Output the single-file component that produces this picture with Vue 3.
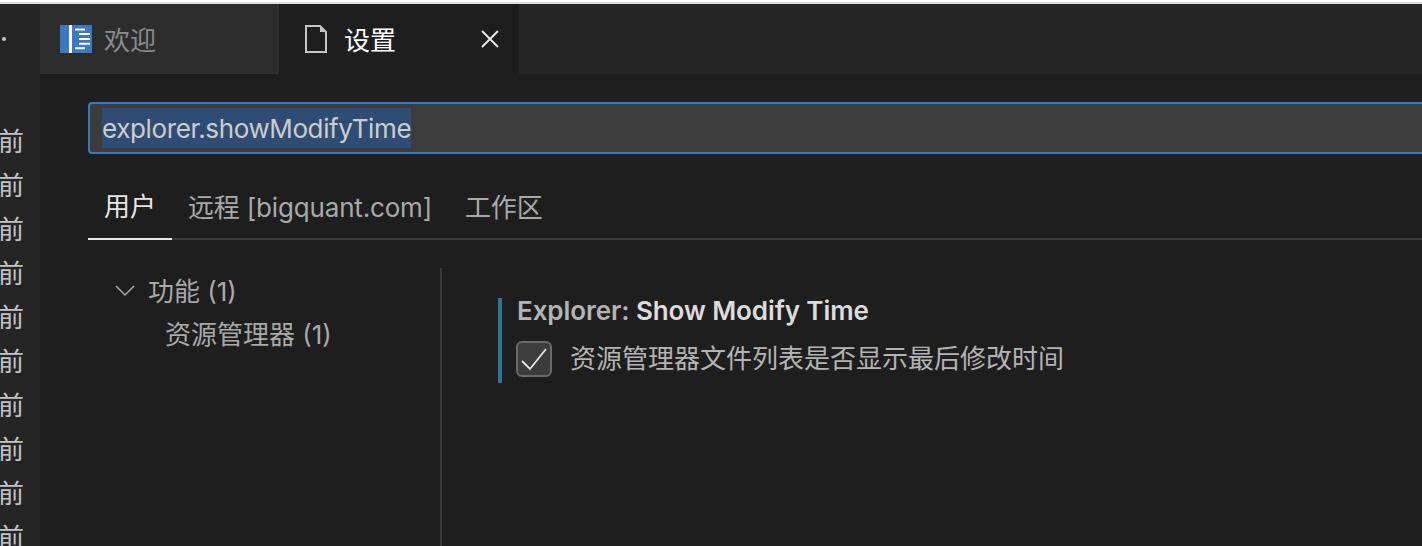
<style>
body {
  margin: 0;
  background: #1e1e1e;
}
</style>

<style scoped>
.page {
  width: 1422px;
  height: 546px;
  overflow: hidden;
  box-sizing: border-box;
  border-top: 2px solid #fff;
}

.window {
  display: flex;
  height: 544px;
  overflow: hidden;
  box-sizing: border-box;
  border-top: 2px solid #dedede;
  background: #1e1e1e;
  color: #ccc;
  font-family: Inter, "Noto Sans CJK SC", sans-serif;
  font-size: 26px;
}

.side {
  flex: 0 0 40px;
  background: #252526;
  overflow: hidden;
}

.side-dot {
  width: 4px;
  height: 4px;
  margin: 33px 0 0 2px;
  border-radius: 50%;
  background: #ccc;
}

.side-lines {
  margin: 77px 0 0 -2px;
  font-family: "Noto Sans CJK SC", sans-serif;
  line-height: 44px;
  color: #c4c4c4;
}

.main {
  flex: 1;
  min-width: 0;
}

.tabs {
  display: flex;
  height: 70px;
  background: #252526;
}

.tab {
  display: flex;
  align-items: center;
  box-sizing: border-box;
  width: 239px;
  padding-left: 20px;
  background: #2d2d2d;
  color: #8a8a8a;
  font-family: "Noto Sans CJK SC", sans-serif;
}

.tab.active {
  width: 240px;
  padding-left: 26px;
  background: #1e1e1e;
  color: #fff;
}

.tab-icon {
  flex: none;
  margin-right: 12px;
}

.tab.active .tab-icon {
  margin-right: 17px;
}

.tab-label {
  flex: 1;
  margin-bottom: 2px;
}

.tab-close {
  flex: none;
  margin-right: 20px;
}

.search {
  box-sizing: border-box;
  height: 52px;
  margin: 28px -8px 0 48px;
  padding: 4px 0 0 12px;
  border: 2px solid #3478c6;
  border-radius: 4px;
  background: #3c3c3c;
}

.search-text {
  display: inline-block;
  height: 40px;
  line-height: 41px;
  letter-spacing: -0.38px;
  background: #2f4d74;
  color: #ccc;
}

.scope {
  display: flex;
  height: 70px;
  margin: 16px 0 0 48px;
  border-bottom: 2px solid #3a3a3a;
  box-sizing: border-box;
}

.scope-item {
  display: flex;
  align-items: center;
  box-sizing: border-box;
  height: 70px;
  padding: 0 17px 0 16px;
  letter-spacing: -0.17px;
  white-space: nowrap;
  color: #a9a9a9;
}

.scope-item.active {
  width: 84px;
  padding-right: 0;
  border-bottom: 2px solid #e7e7e7;
  letter-spacing: 0;
  color: #e7e7e7;
}

.body {
  display: flex;
  margin: 28px 0 0 48px;
}

.tree {
  flex: 0 0 354px;
  height: 280px;
  box-sizing: border-box;
  border-right: 2px solid #3a3a3a;
  color: #a9a9a9;
}

.tree-row {
  display: flex;
  align-items: center;
  box-sizing: border-box;
  height: 43px;
  padding: 0 0 2px 77px;
}

.tree-row.group {
  height: 44px;
  padding-left: 26px;
}

.tree-chevron {
  flex: none;
  margin: 3px 12px 0 0;
}

.setting {
  align-self: flex-start;
  box-sizing: border-box;
  height: 85px;
  margin: 30px 0 0 56px;
  padding-left: 15px;
  border-left: 4px solid #2f7396;
}

.setting-title {
  height: 26px;
  line-height: 26px;
  letter-spacing: -0.08px;
  font-weight: 600;
  color: #b4b4b4;
}

.setting-title b {
  font-weight: 600;
  color: #dcdcdc;
}

.setting-row {
  display: flex;
  align-items: center;
  height: 36px;
  margin-top: 17px;
  margin-left: -1px;
  color: #b4b4b4;
}

.setting-desc {
  margin-bottom: 6px;
}

.check {
  flex: none;
  box-sizing: border-box;
  width: 36px;
  height: 36px;
  margin-right: 18px;
  border: 2px solid #6a6a6a;
  border-radius: 6px;
  background: #3c3c3c;
}

.check svg {
  display: block;
}
</style>

<template>
  <div class="page">
    <div class="window">
      <aside class="side">
        <div class="side-dot"></div>
        <div class="side-lines">
          <div v-for="n in 10" :key="n">前</div>
        </div>
      </aside>

      <div class="main">
        <div class="tabs">
          <div class="tab">
            <svg class="tab-icon" width="32" height="28" viewBox="0 0 32 28">
              <rect width="32" height="28" fill="#3b79c2" />
              <rect x="9" width="3" height="28" fill="#fff" />
              <path d="M15 4.5h10M19 9h11M19 14h11M19 18.7h11M15 23.3h10" stroke="#fff" stroke-width="2" fill="none" />
            </svg>
            <span class="tab-label">欢迎</span>
          </div>
          <div class="tab active">
            <svg class="tab-icon" width="22" height="28" viewBox="0 0 22 28">
              <path d="M1 1h14l6 6v20H1z" fill="none" stroke="#c5c5c5" stroke-width="2" />
              <path d="M15 1l6 6h-6z" fill="#c5c5c5" />
            </svg>
            <span class="tab-label">设置</span>
            <svg class="tab-close" width="18" height="18" viewBox="0 0 18 18">
              <path d="M1 1l16 16M17 1L1 17" stroke="#e6e6e6" stroke-width="2" />
            </svg>
          </div>
        </div>

        <div class="search">
          <span class="search-text">explorer.showModifyTime</span>
        </div>

        <div class="scope">
          <div class="scope-item active">用户</div>
          <div class="scope-item">远程 [bigquant.com]</div>
          <div class="scope-item">工作区</div>
        </div>

        <div class="body">
          <div class="tree">
            <div class="tree-row group">
              <svg class="tree-chevron" width="22" height="14" viewBox="0 0 22 14">
                <path d="M2 2l9 9 9-9" fill="none" stroke="#a9a9a9" stroke-width="1.5" />
              </svg>
              功能 (1)
            </div>
            <div class="tree-row">资源管理器 (1)</div>
          </div>

          <div class="setting">
            <div class="setting-title">Explorer: <b>Show Modify Time</b></div>
            <div class="setting-row">
              <span class="check">
                <svg width="32" height="32" viewBox="0 0 32 32">
                  <path d="M4 18l8 8L28 6" fill="none" stroke="#e6e6e6" stroke-width="1.8" />
                </svg>
              </span>
              <span class="setting-desc">资源管理器文件列表是否显示最后修改时间</span>
            </div>
          </div>
        </div>
      </div>
    </div>
  </div>
</template>

<script setup>
</script>
